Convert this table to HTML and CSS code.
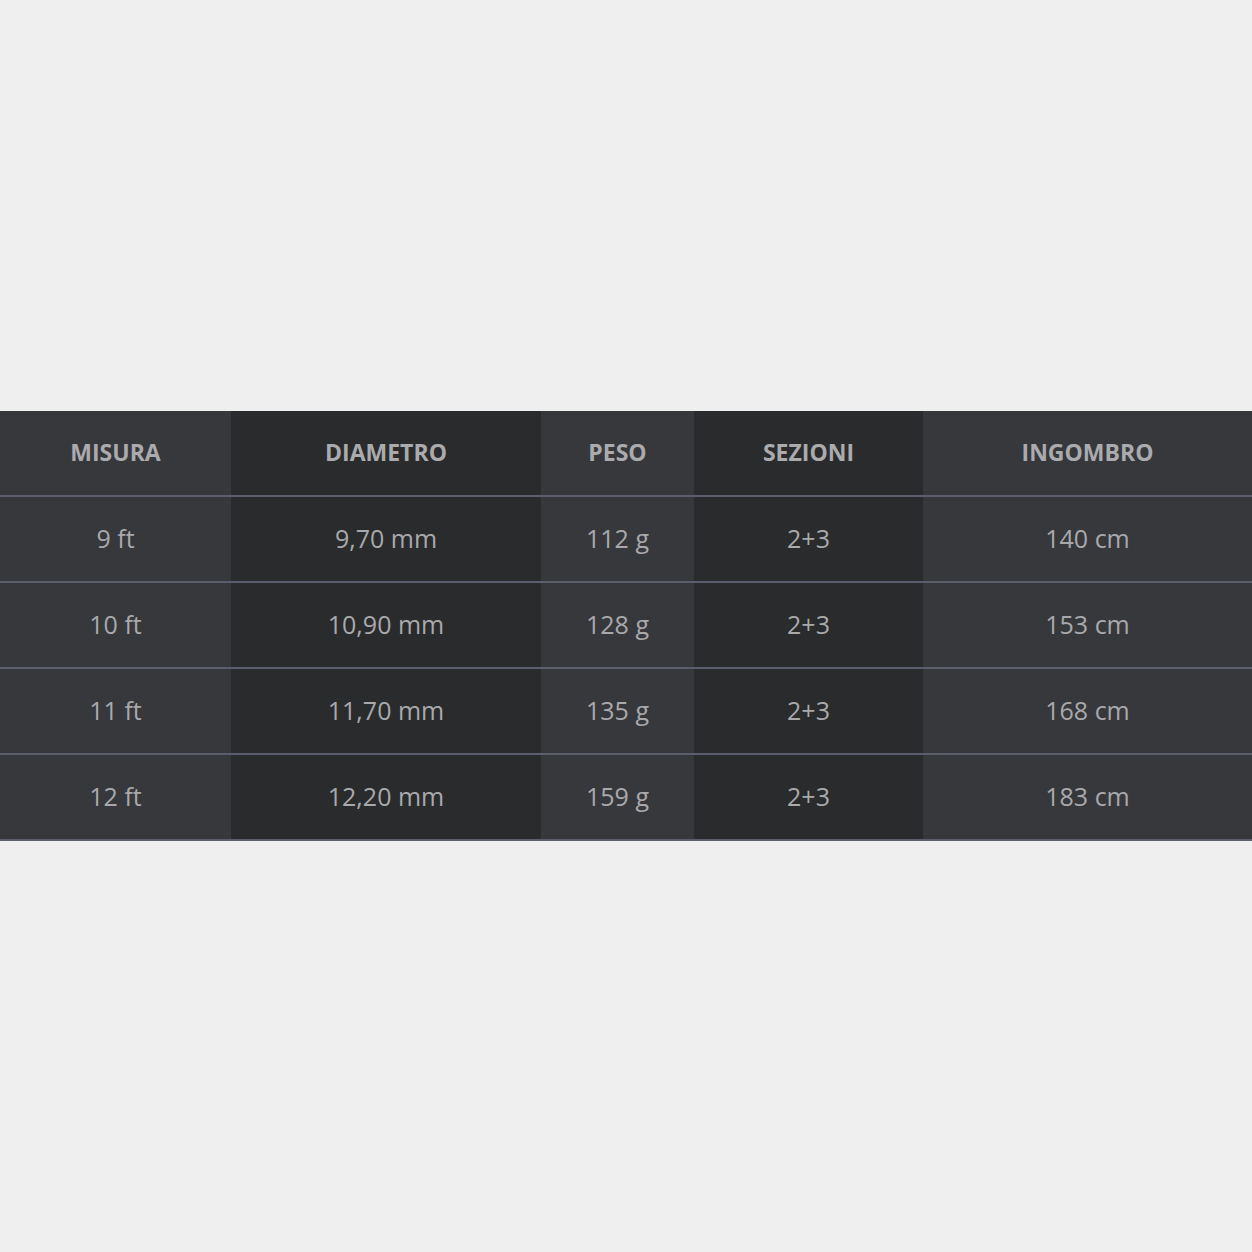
FILE: index.html
```html
<!DOCTYPE html>
<html lang="it">
<head>
<meta charset="utf-8">
<title>Tabella misure</title>
<link rel="stylesheet" href="styles.css">
</head>
<body>
<div class="wrap">
<table class="specs">
  <thead>
    <tr>
      <th class="c1 light">MISURA</th>
      <th class="c2 dark">DIAMETRO</th>
      <th class="c3 light">PESO</th>
      <th class="c4 dark">SEZIONI</th>
      <th class="c5 light">INGOMBRO</th>
    </tr>
  </thead>
  <tbody>
    <tr>
      <td class="light">9 ft</td><td class="dark">9,70 mm</td><td class="light">112 g</td><td class="dark">2+3</td><td class="light">140 cm</td>
    </tr>
    <tr>
      <td class="light">10 ft</td><td class="dark">10,90 mm</td><td class="light">128 g</td><td class="dark">2+3</td><td class="light">153 cm</td>
    </tr>
    <tr>
      <td class="light">11 ft</td><td class="dark">11,70 mm</td><td class="light">135 g</td><td class="dark">2+3</td><td class="light">168 cm</td>
    </tr>
    <tr>
      <td class="light">12 ft</td><td class="dark">12,20 mm</td><td class="light">159 g</td><td class="dark">2+3</td><td class="light">183 cm</td>
    </tr>
  </tbody>
</table>
</div>
</body>
</html>
```
FILE: styles.css
```css
html, body {
  margin: 0;
  padding: 0;
  background: #efefef;
}
.wrap {
  min-height: 100vh;
  display: flex;
  align-items: center;
}
.specs {
  width: 100%;
  border-collapse: collapse;
  table-layout: fixed;
  font-family: "Open Sans", "Liberation Sans", sans-serif;
  color: #a9a9ac;
}
.specs th,
.specs td {
  height: 82px;
  padding: 0 0 2px 0;
  text-align: center;
  vertical-align: middle;
  border-bottom: 2px solid #5b5f6d;
}
.specs th {
  font-size: 23px;
  font-weight: 700;
  color: #ababae;
}
.specs td {
  font-size: 25px;
  font-weight: 400;
}
.c1 { width: 231px; }
.c2 { width: 310px; }
.c3 { width: 153px; }
.c4 { width: 229px; }
.c5 { width: auto; }
.light { background: #37383c; }
.dark { background: #2a2b2d; }
```
